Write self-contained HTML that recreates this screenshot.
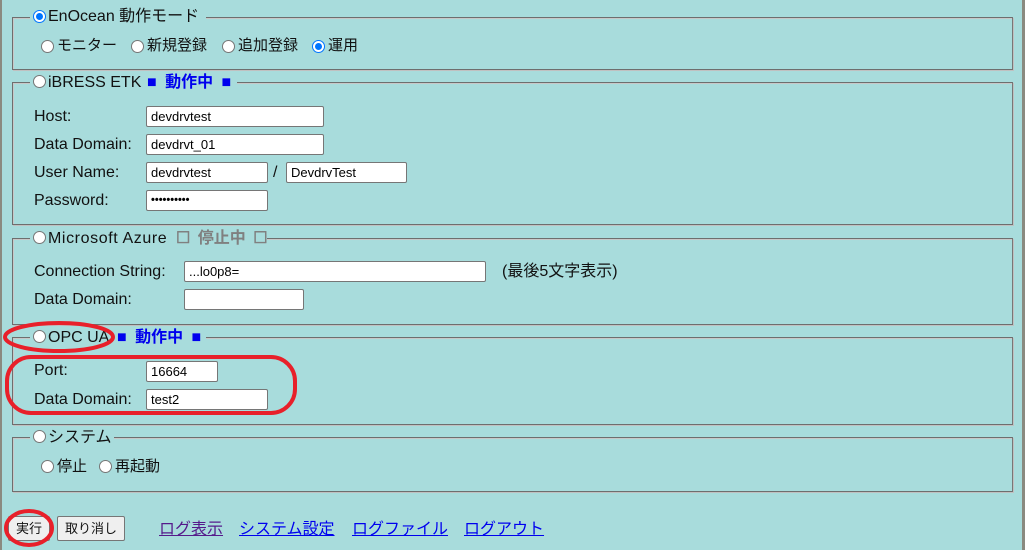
<!DOCTYPE html>
<html><head><meta charset="utf-8"><style>
*{box-sizing:border-box}
body{margin:0;width:1025px;height:550px;background:#a8dcdc;position:relative;overflow:hidden;font-family:"Liberation Sans","Noto Sans CJK JP",sans-serif;font-size:15px;color:#111}
.a{position:absolute;white-space:nowrap;line-height:18px}
.fs{position:absolute;left:12px;width:1001px;border:1px solid #6e6e6e;border-right-color:#777;box-shadow:1px 1px 0 #c8c8c8 inset,1px 1px 0 #c0c0c0}
.lg{position:absolute;background:#a8dcdc;height:18px}
.r{position:absolute;width:13px;height:13px;border-radius:50%;background:#fff;border:1px solid #767676}
.r.c{border-color:#0075ff}
.r.c::after{content:"";position:absolute;left:2px;top:2px;width:7px;height:7px;border-radius:50%;background:#0075ff}
.in{position:absolute;height:21px;background:#fff;border:1px solid #767676;border-radius:2px;font-size:13px;padding:2px 4px;line-height:15px;color:#000}
.bl{color:#0000ee;font-weight:bold}
.gr{color:#808080;font-weight:bold}
.btn{position:absolute;top:516px;height:25px;background:#efefef;border:1px solid #767676;border-radius:2px;font-size:13px;text-align:center;line-height:23px}
.lk{position:absolute;top:515px;color:#0000ee;text-decoration:underline;font-size:16px}
.lab{font-size:16px}
</style></head><body>
<div style="position:absolute;left:0;top:0;width:2px;height:550px;background:#8a8a80"></div>
<div style="position:absolute;left:1022px;top:0;width:3px;height:550px;background:#8a8a80"></div>

<div class="fs" style="top:17px;height:53px"></div>
<div class="lg" style="left:30px;top:8px;width:176px"></div>
<div class="r c" style="left:33px;top:10px"></div>
<div class="a" style="left:48px;top:8px;font-size:16px">EnOcean 動作モード</div>
<div class="r" style="left:41px;top:40px"></div><div class="a" style="left:57px;top:37px">モニター</div>
<div class="r" style="left:131px;top:40px"></div><div class="a" style="left:147px;top:37px">新規登録</div>
<div class="r" style="left:222px;top:40px"></div><div class="a" style="left:238px;top:37px">追加登録</div>
<div class="r c" style="left:312px;top:40px"></div><div class="a" style="left:328px;top:37px">運用</div>

<div class="fs" style="top:82px;height:143px"></div>
<div class="lg" style="left:30px;top:73px;width:207px"></div>
<div class="r" style="left:33px;top:75px"></div>
<div class="a" style="left:48px;top:74px;font-size:16px">iBRESS ETK</div>
<div class="a bl" style="left:147px;top:74px;font-size:16px;word-spacing:4px">■ 動作中 ■</div>
<div class="a lab" style="left:34px;top:108px">Host:</div>
<div class="in" style="left:146px;top:106px;width:178px">devdrvtest</div>
<div class="a lab" style="left:34px;top:136px">Data Domain:</div>
<div class="in" style="left:146px;top:134px;width:178px">devdrvt_01</div>
<div class="a lab" style="left:34px;top:164px">User Name:</div>
<div class="in" style="left:146px;top:162px;width:122px">devdrvtest</div>
<div class="a lab" style="left:273px;top:164px">/</div>
<div class="in" style="left:286px;top:162px;width:121px">DevdrvTest</div>
<div class="a lab" style="left:34px;top:192px">Password:</div>
<div class="in" style="left:146px;top:190px;width:122px;font-size:11px;font-weight:bold">••••••••••</div>

<div class="fs" style="top:238px;height:87px"></div>
<div class="lg" style="left:30px;top:229px;width:237px"></div>
<div class="r" style="left:33px;top:231px"></div>
<div class="a" style="left:48px;top:230px;font-size:16px;letter-spacing:0.6px">Microsoft Azure</div>
<div class="a gr" style="left:176px;top:230px;font-size:16px;word-spacing:3px">☐ 停止中 ☐</div>
<div class="a lab" style="left:34px;top:263px">Connection String:</div>
<div class="in" style="left:184px;top:261px;width:302px">...lo0p8=</div>
<div class="a lab" style="left:502px;top:263px">(最後5文字表示)</div>
<div class="a lab" style="left:34px;top:291px">Data Domain:</div>
<div class="in" style="left:184px;top:289px;width:120px"></div>

<div class="fs" style="top:337px;height:88px"></div>
<div class="lg" style="left:30px;top:328px;width:176px"></div>
<div class="r" style="left:33px;top:330px"></div>
<div class="a" style="left:48px;top:329px;font-size:16px">OPC UA</div>
<div class="a bl" style="left:117px;top:329px;font-size:16px;word-spacing:4px">■ 動作中 ■</div>
<div class="a lab" style="left:34px;top:362px">Port:</div>
<div class="in" style="left:146px;top:361px;width:72px">16664</div>
<div class="a lab" style="left:34px;top:391px">Data Domain:</div>
<div class="in" style="left:146px;top:389px;width:122px">test2</div>

<div class="fs" style="top:437px;height:55px"></div>
<div class="lg" style="left:30px;top:428px;width:84px"></div>
<div class="r" style="left:33px;top:430px"></div>
<div class="a" style="left:48px;top:429px;font-size:16px">システム</div>
<div class="r" style="left:41px;top:460px"></div><div class="a" style="left:57px;top:458px">停止</div>
<div class="r" style="left:99px;top:460px"></div><div class="a" style="left:115px;top:458px">再起動</div>

<div class="btn" style="left:8px;width:42px">実行</div>
<div class="btn" style="left:57px;width:68px">取り消し</div>
<div class="lk" style="left:159px;color:#551a8b">ログ表示</div>
<div class="lk" style="left:239px">システム設定</div>
<div class="lk" style="left:352px">ログファイル</div>
<div class="lk" style="left:464px">ログアウト</div>

<svg style="position:absolute;left:0;top:0" width="1025" height="550">
<g fill="none" stroke="#e8202a" stroke-width="4">
<ellipse cx="59" cy="337" rx="54" ry="14"/>
<rect x="7" y="357" width="288" height="56" rx="24"/>
<ellipse cx="29" cy="528" rx="23" ry="17"/>
</g></svg>
</body></html>
